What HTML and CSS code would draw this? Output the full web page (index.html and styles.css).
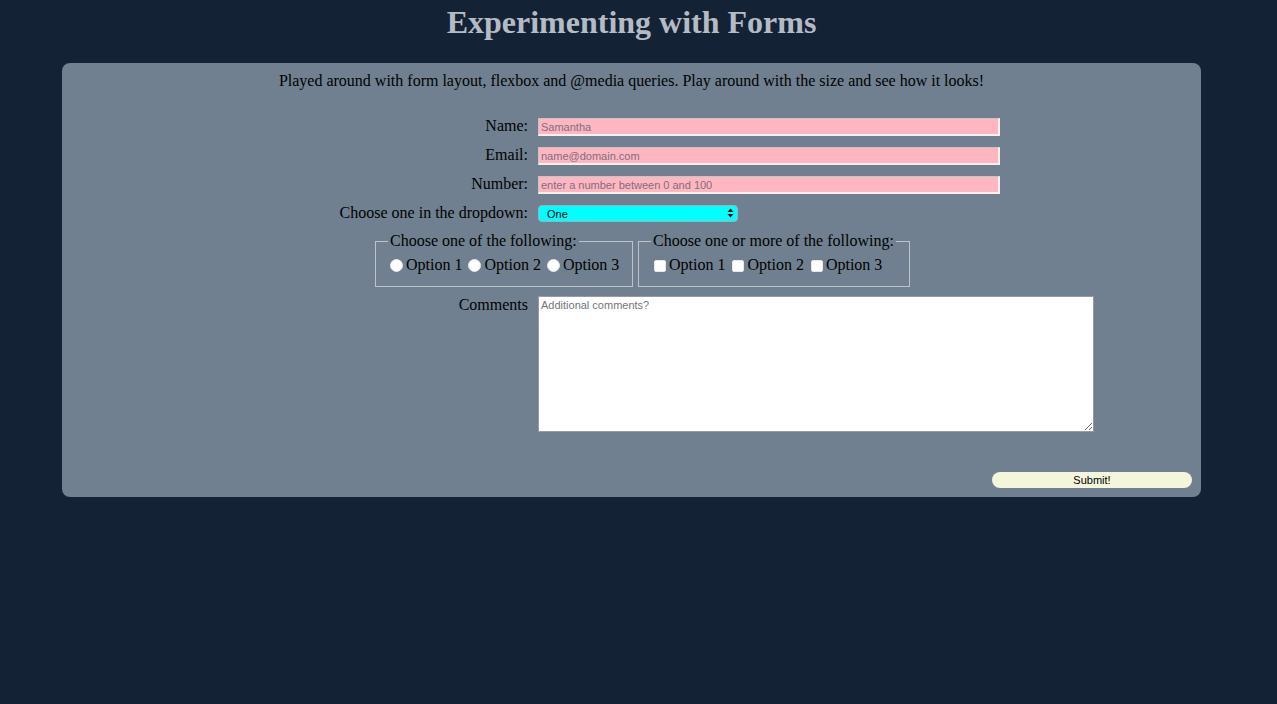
FILE: index.html
```html
<!DOCTYPE html>
<html lang="en">
<head>
<meta charset="utf-8">
<title>Experimenting with Forms</title>
<link rel="stylesheet" href="styles.css">
</head>
<body>
<div class="page">
  <h1 class="title">Experimenting with Forms</h1>
  <div class="card">
    <p class="intro">Played around with form layout, flexbox and @media queries. Play around with the size and see how it looks!</p>
    <form class="form">
      <div class="row">
        <label class="lbl" for="name">Name:</label>
        <input class="text" id="name" type="text" placeholder="Samantha">
      </div>
      <div class="row">
        <label class="lbl" for="email">Email:</label>
        <input class="text" id="email" type="email" placeholder="name@domain.com">
      </div>
      <div class="row">
        <label class="lbl" for="number">Number:</label>
        <input class="text" id="number" type="text" placeholder="enter a number between 0 and 100">
      </div>
      <div class="row">
        <label class="lbl" for="drop">Choose one in the dropdown:</label>
        <div class="select-wrap">
          <select class="select" id="drop"><option>One</option><option>Two</option><option>Three</option></select>
          <svg class="arrows" width="7" height="10" viewBox="0 0 7 10"><path d="M3.5 0.5 L6.5 4 L0.5 4 Z M3.5 9.5 L6.5 6 L0.5 6 Z" fill="#000"/></svg>
        </div>
      </div>
      <div class="groups">
        <fieldset class="group g1">
          <legend>Choose one of the following:</legend>
          <div class="opts">
            <label class="opt"><input class="radio" type="radio" name="r">Option 1</label>
            <label class="opt"><input class="radio" type="radio" name="r">Option 2</label>
            <label class="opt"><input class="radio" type="radio" name="r">Option 3</label>
          </div>
        </fieldset>
        <fieldset class="group g2">
          <legend>Choose one or more of the following:</legend>
          <div class="opts">
            <label class="opt"><input class="check" type="checkbox">Option 1</label>
            <label class="opt"><input class="check" type="checkbox">Option 2</label>
            <label class="opt"><input class="check" type="checkbox">Option 3</label>
          </div>
        </fieldset>
      </div>
      <div class="row row-top">
        <label class="lbl" for="comments">Comments</label>
        <textarea class="area" id="comments" placeholder="Additional comments?"></textarea>
      </div>
      <div class="actions">
        <button class="submit" type="button">Submit!</button>
      </div>
    </form>
  </div>
</div>
</body>
</html>
```

FILE: styles.css
```css
html, body {
  margin: 0;
  padding: 0;
  background: #142236;
}
body {
  font-family: "Liberation Serif", "Times New Roman", serif;
  font-size: 16px;
  color: #000;
}
.page {
  width: 1263px;
}
.title {
  margin: 0 0 22px 0;
  padding-top: 4px;
  font-size: 32px;
  line-height: 37px;
  font-weight: bold;
  text-align: center;
  color: #b5bbc4;
}
.card {
  margin-left: 62px;
  width: 1139px;
  box-sizing: border-box;
  background: #708090;
  border-radius: 8px;
  padding: 9px 9px 9px 9px;
}
.intro {
  margin: 0;
  line-height: 18px;
  text-align: center;
}
.form {
  padding-top: 28px;
}
.row {
  display: flex;
  align-items: center;
  height: 18px;
  margin-bottom: 11px;
}
.lbl {
  flex: 0 0 457px;
  text-align: right;
  margin-right: 10px;
  line-height: 16px;
  position: relative;
  top: -1px;
}
.text {
  box-sizing: border-box;
  width: 462px;
  height: 18px;
  margin: 0;
  padding: 0 2px;
  background: #ffb6c1;
  border-style: solid;
  border-width: 1px 2px 2px 1px;
  border-color: #c9c3c4 #f4f0f0 #f4f0f0 #c9c3c4;
  font-family: "Liberation Sans", Arial, sans-serif;
  font-size: 11px;
  color: #333;
  outline: none;
}
.text::placeholder {
  color: #7d6f7f;
}
.select-wrap {
  position: relative;
  width: 200px;
  height: 17px;
  align-self: flex-start;
}
.select {
  display: block;
  appearance: none;
  -webkit-appearance: none;
  box-sizing: border-box;
  width: 200px;
  height: 17px;
  margin: 0;
  padding: 0 0 0 8px;
  background: #00ffff;
  border: 1px solid #9fb0b8;
  border-radius: 4px;
  font-family: "Liberation Sans", Arial, sans-serif;
  font-size: 11px;
  color: #000;
}
.arrows {
  position: absolute;
  right: 4px;
  top: 3px;
  pointer-events: none;
}
.groups {
  display: flex;
  gap: 5px;
  margin: -2px 0 0 304px;
}
.group {
  box-sizing: border-box;
  margin: 0;
  padding: 6px 12px 12px 12px;
  border: 1px solid #bcc2c8;
  min-width: 0;
}
.g1 { width: 258px; }
.g2 { width: 272px; }
.group legend {
  padding: 0 2px;
  line-height: 18px;
}
.opts {
  display: flex;
  align-items: center;
  line-height: 18px;
  padding-left: 2px;
}
.opt {
  display: flex;
  align-items: center;
  margin-right: 6px;
  white-space: nowrap;
}
.radio {
  appearance: none;
  -webkit-appearance: none;
  width: 13px;
  height: 13px;
  margin: 1px 3px 0 0;
  border-radius: 50%;
  background: #fff;
  border: 1px solid #e8e8e8;
  box-sizing: border-box;
}
.check {
  appearance: none;
  -webkit-appearance: none;
  width: 12px;
  height: 12px;
  margin: 1px 3px 0 1px;
  border-radius: 2px;
  background: #fff;
  border: 1px solid #e8e8e8;
  box-sizing: border-box;
}
.row-top {
  align-items: flex-start;
  height: auto;
  margin-top: 9px;
  margin-bottom: 0;
}
.row-top .lbl {
  line-height: 18px;
  top: 0;
}
.area {
  box-sizing: border-box;
  width: 556px;
  height: 136px;
  margin: 0;
  padding: 2px 2px;
  background: #fff;
  border: 1px solid #9a9a9a;
  font-family: "Liberation Sans", Arial, sans-serif;
  font-size: 11px;
  resize: both;
  outline: none;
}
.area::placeholder {
  color: #757575;
}
.actions {
  display: flex;
  justify-content: flex-end;
  margin-top: 40px;
}
.submit {
  width: 200px;
  height: 16px;
  margin: 0;
  padding: 0;
  border: none;
  border-radius: 8px;
  background: #f4f6dc;
  font-family: "Liberation Sans", Arial, sans-serif;
  font-size: 11px;
  color: #000;
  line-height: 16px;
}
```
